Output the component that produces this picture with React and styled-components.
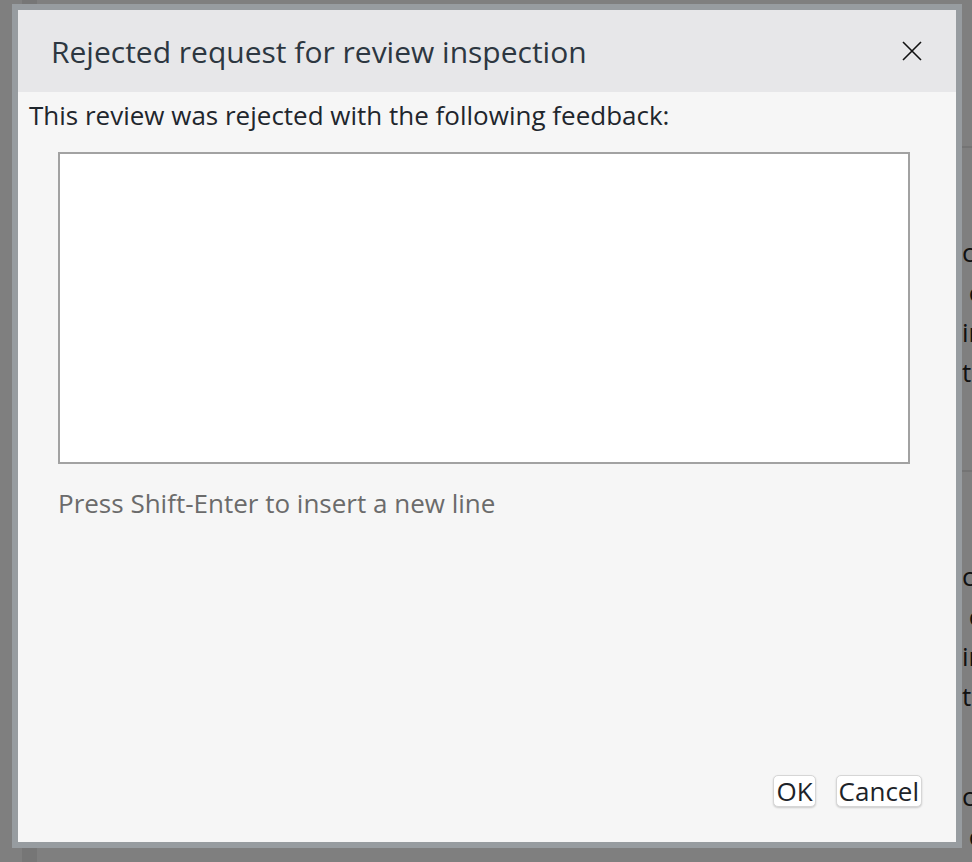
import React from "react";
import styled, { createGlobalStyle } from "styled-components";

const Global = createGlobalStyle`
  html, body { margin: 0; padding: 0; }
  body {
    font-family: "Open Sans", "Noto Sans", sans-serif;
    background: #ffffff;
    overflow: hidden;
  }
`;

const Page = styled.div`
  width: 972px;
  height: 862px;
  display: grid;
  grid-template-columns: 22px 15px 925px 1fr;
  background: #ffffff;
  color: #222;
`;

const Rail = styled.div`
  background: ${(p) => p.$tone};
`;

const MainCol = styled.div`
  display: flex;
  flex-direction: column;
  justify-content: flex-end;
  font-size: 26px;
  line-height: 30px;
`;

const BackLine = styled.div`
  display: flex;
  padding-left: 313px;
  margin-bottom: -14px;
  white-space: nowrap;
`;

const BackWord = styled.span`
  width: ${(p) => p.$w}px;
`;

const SideCol = styled.div`
  display: flex;
  flex-direction: column;
  padding-top: 146px;
  font-size: 26px;
`;

const SideBlock = styled.div`
  border-top: 2px solid #e8e8e8;
  padding-top: 84px;
  height: ${(p) => p.$h}px;
  box-sizing: border-box;
  display: flex;
  flex-direction: column;
  line-height: 40px;
  white-space: nowrap;
`;

const SideGap = styled.span`
  height: 60px;
`;

const Overlay = styled.div`
  position: fixed;
  inset: 0;
  background: rgba(0, 0, 0, 0.5);
`;

const Dialog = styled.div`
  position: fixed;
  left: 12px;
  top: 4px;
  width: 950px;
  height: 844px;
  box-sizing: border-box;
  border: 6px solid #979ca0;
  background: #f6f6f6;
  display: flex;
  flex-direction: column;
`;

const Header = styled.div`
  height: 82px;
  flex: none;
  background: #e7e7e9;
  display: flex;
  align-items: center;
  justify-content: space-between;
  padding: 0 32px 0 33px;
`;

const Title = styled.h1`
  margin: 0;
  font-size: 30px;
  font-weight: 400;
  color: #2d3741;
`;

const CloseButton = styled.button`
  border: 0;
  background: transparent;
  padding: 0;
  width: 24px;
  height: 24px;
  display: flex;
  align-items: center;
  justify-content: center;
  cursor: pointer;
`;

const Body = styled.div`
  flex: 1;
  display: flex;
  flex-direction: column;
  padding: 8px 34px 35px 11px;
`;

const Lead = styled.p`
  margin: 0;
  font-size: 26px;
  line-height: 30px;
  color: #1f262d;
`;

const Field = styled.div`
  margin: 22px 0 0 29px;
  display: flex;
  flex-direction: column;
`;

const TextArea = styled.textarea`
  width: 852px;
  height: 312px;
  box-sizing: border-box;
  border: 2px solid #a2a2a2;
  background: #ffffff;
  resize: none;
  outline: none;
  font-family: inherit;
  font-size: 22px;
  padding: 8px;
`;

const Hint = styled.p`
  margin: 24px 0 0 0;
  font-size: 26px;
  line-height: 30px;
  color: #6b6b6b;
`;

const Actions = styled.div`
  margin-top: auto;
  display: flex;
  justify-content: flex-end;
  gap: 20px;
`;

const Button = styled.button`
  font-family: "Open Sans", sans-serif;
  font-size: 26px;
  line-height: 30px;
  color: #1d2329;
  background: #ffffff;
  border: 1px solid #d6d6d6;
  border-radius: 5px;
  box-shadow: 0 1px 2px rgba(0, 0, 0, 0.18);
  padding: 0 2px;
  cursor: pointer;
`;

function CloseIcon() {
  return (
    <svg width="20" height="20" viewBox="0 0 20 20" aria-hidden="true">
      <path d="M1 1 L19 19 M19 1 L1 19" stroke="#111" strokeWidth="1.6" fill="none" />
    </svg>
  );
}

export default function App() {
  return (
    <>
      <Global />
      <Page>
        <Rail $tone="#ffffff" />
        <Rail $tone="#ececec" />
        <MainCol>
          <BackLine>
            <BackWord $w={50}>g</BackWord>
            <BackWord $w={380}>p</BackWord>
            <BackWord $w={30}>,</BackWord>
            <BackWord $w={30}>p</BackWord>
          </BackLine>
        </MainCol>
        <SideCol>
          <SideBlock $h={324}>
            <span>c</span>
            <span>&nbsp;e</span>
            <span>in</span>
            <span>t</span>
          </SideBlock>
          <SideBlock $h={400}>
            <span>c</span>
            <span>&nbsp;e</span>
            <span>in</span>
            <span>t</span>
            <SideGap />
            <span>c</span>
            <span>&nbsp;e</span>
          </SideBlock>
        </SideCol>
      </Page>
      <Overlay />
      <Dialog role="dialog" aria-labelledby="dlg-title">
        <Header>
          <Title id="dlg-title">Rejected request for review inspection</Title>
          <CloseButton aria-label="Close">
            <CloseIcon />
          </CloseButton>
        </Header>
        <Body>
          <Lead>This review was rejected with the following feedback:</Lead>
          <Field>
            <TextArea />
            <Hint>Press Shift-Enter to insert a new line</Hint>
          </Field>
          <Actions>
            <Button>OK</Button>
            <Button>Cancel</Button>
          </Actions>
        </Body>
      </Dialog>
    </>
  );
}
